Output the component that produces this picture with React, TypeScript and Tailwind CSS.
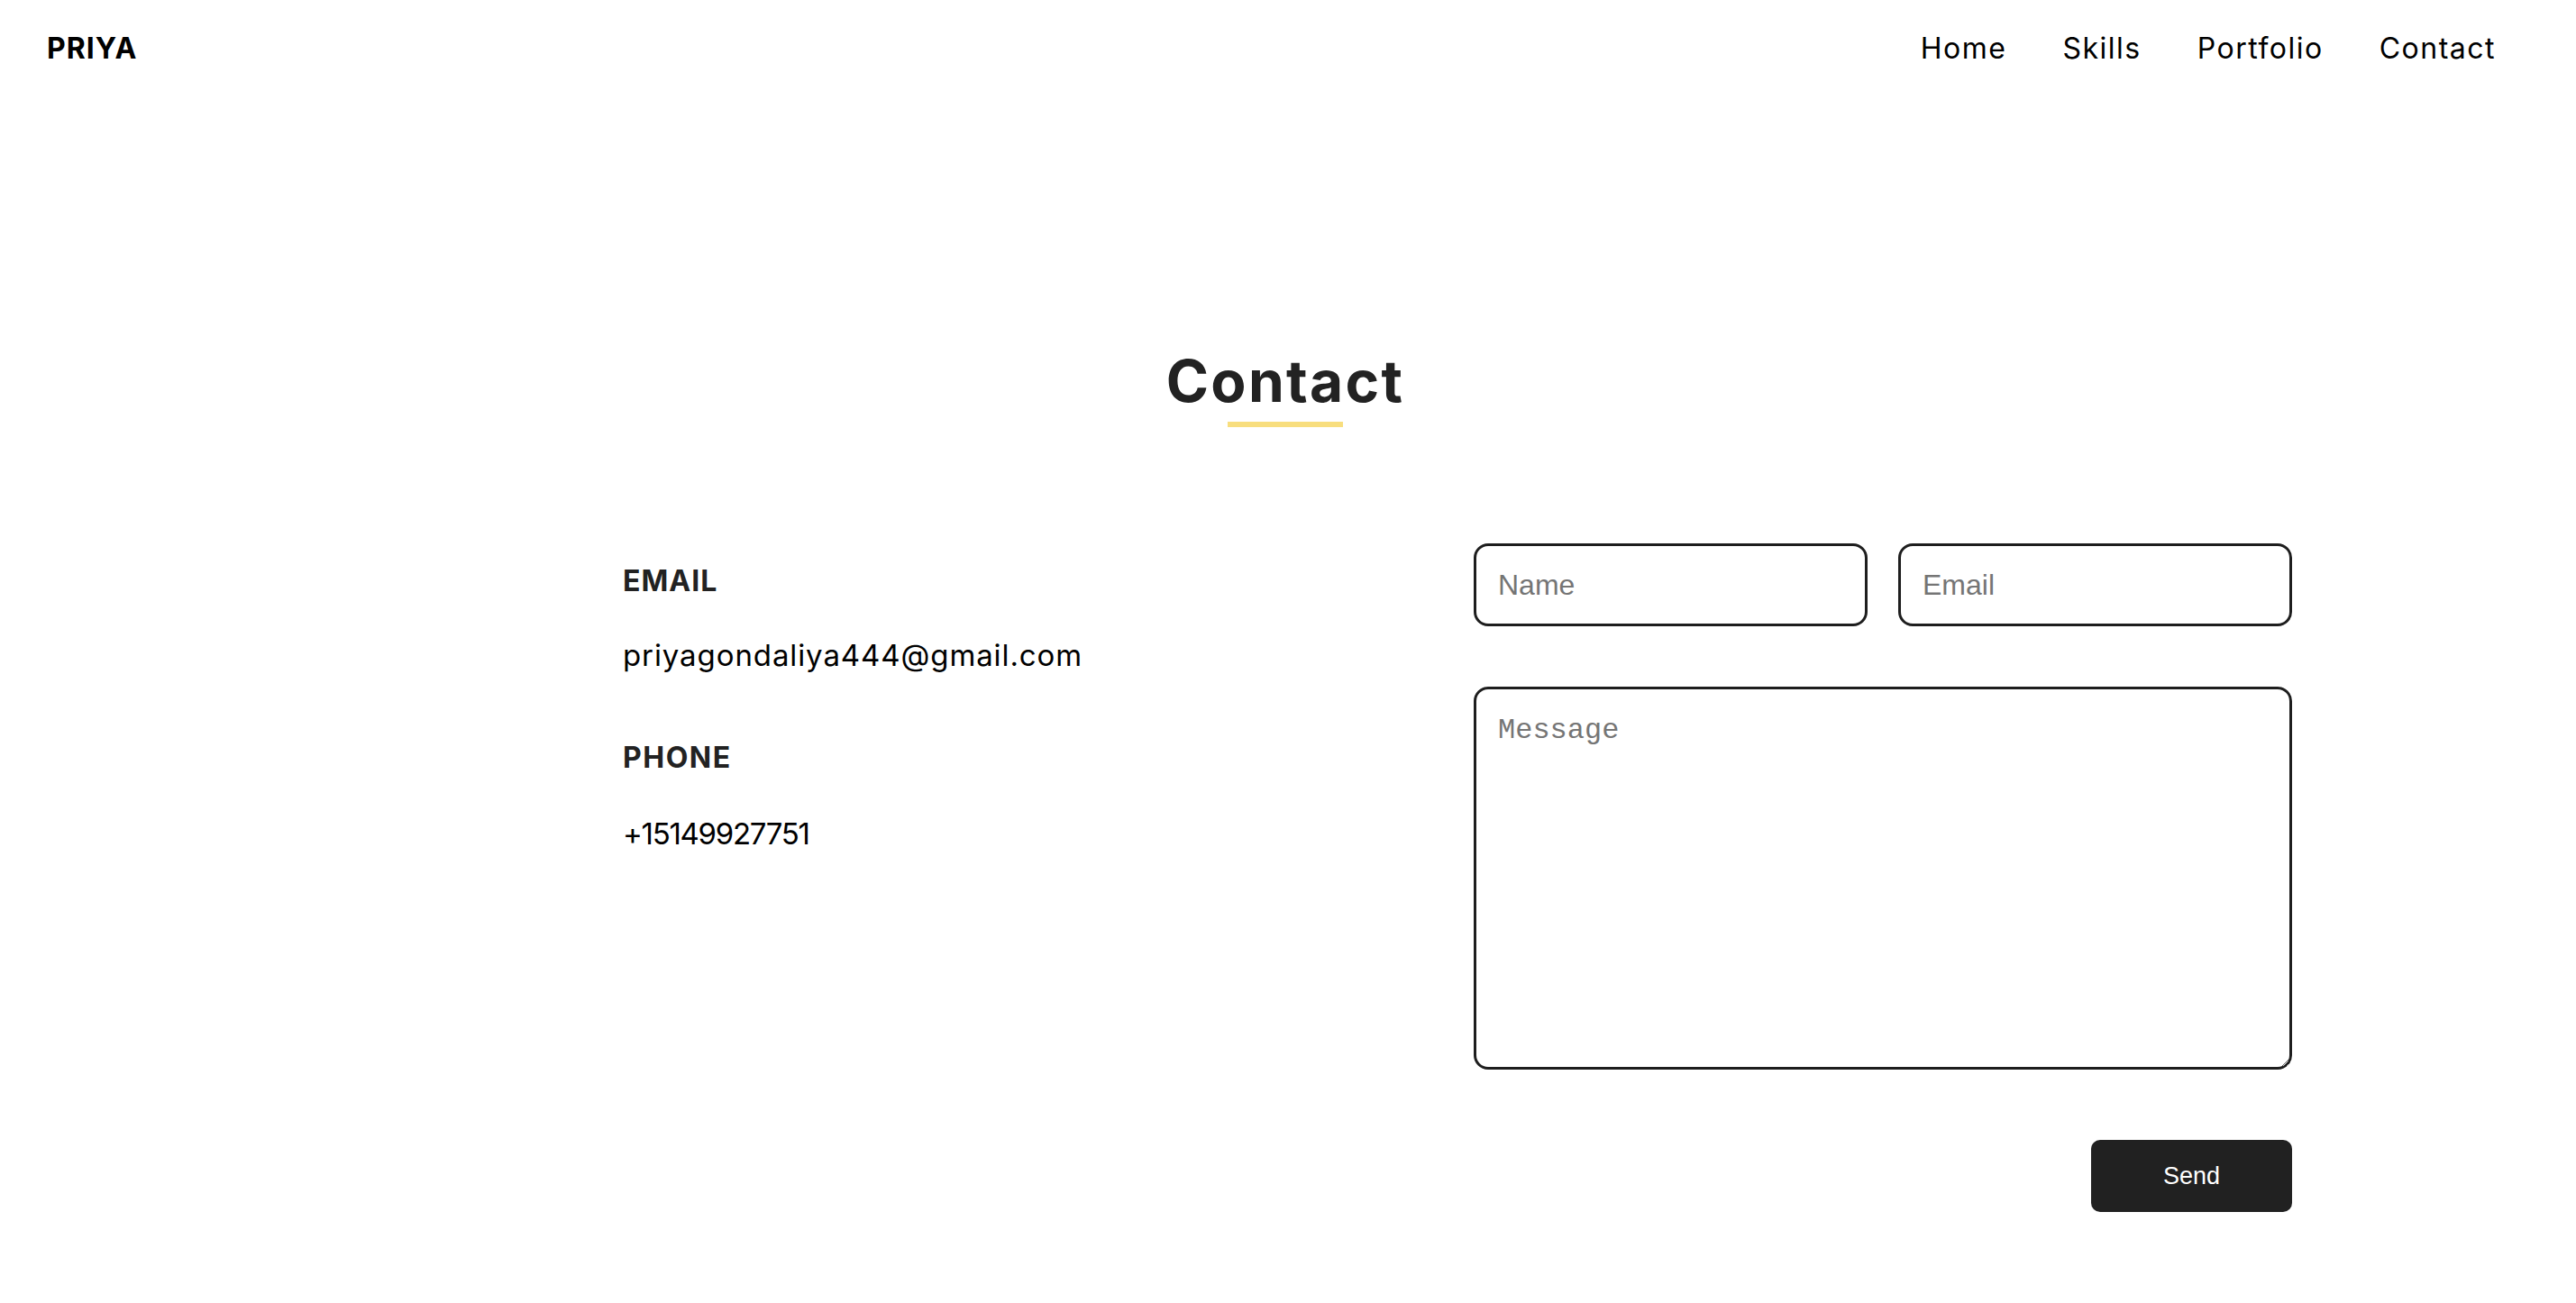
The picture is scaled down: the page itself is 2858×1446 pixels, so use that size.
import React from "react";

export default function App() {
  const sans = { fontFamily: "Inter, 'Open Sans', sans-serif" };
  return (
    <div className="min-h-screen w-full bg-white text-black" style={sans}>
      <header className="flex h-[108px] items-center justify-between pl-[52px] pr-[89px]">
        <div className="text-[32px] font-bold leading-none tracking-[1px] text-black">PRIYA</div>
        <nav className="flex items-center gap-[62px] text-[32px] leading-none tracking-[1.5px] text-black">
          <a>Home</a>
          <a>Skills</a>
          <a>Portfolio</a>
          <a>Contact</a>
        </nav>
      </header>

      <main className="flex flex-col items-center pt-[283px]">
        <div className="flex flex-col items-center pr-[6px]">
          <h1 className="text-[64px] font-bold leading-none tracking-[2.3px] text-[#222222]">Contact</h1>
          <div className="mt-[13px] h-[6px] w-[128px] bg-[#f8de7e]" />
        </div>

        <section className="mt-[129px] flex w-full pl-[691px]">
          <div className="flex w-[944px] flex-col pt-[26px]">
            <div className="text-[32px] font-bold leading-none tracking-[1px] text-[#222222]">EMAIL</div>
            <div className="mt-[50px] text-[33px] leading-none tracking-[0.9px] text-black">priyagondaliya444@gmail.com</div>
            <div className="mt-[81px] text-[32px] font-bold leading-none tracking-[1.5px] text-[#222222]">PHONE</div>
            <div className="mt-[52px] text-[33px] leading-none tracking-[-1.3px] text-black">+15149927751</div>
          </div>

          <form className="flex w-[908px] flex-col" onSubmit={(e) => e.preventDefault()}>
            <div className="grid grid-cols-2 gap-[34px]">
              <input
                type="text"
                placeholder="Name"
                className="h-[92px] rounded-[16px] border-[3px] border-[#1e1e1e] px-[24px] text-[32px] placeholder-[#757575] outline-none"
                style={{ fontFamily: "'Liberation Sans', Arial, sans-serif" }}
              />
              <input
                type="email"
                placeholder="Email"
                className="h-[92px] rounded-[16px] border-[3px] border-[#1e1e1e] px-[24px] text-[32px] placeholder-[#757575] outline-none"
                style={{ fontFamily: "'Liberation Sans', Arial, sans-serif" }}
              />
            </div>
            <textarea
              placeholder="Message"
              className="mt-[67px] h-[425px] rounded-[16px] border-[3px] border-[#1e1e1e] px-[24px] pt-[22px] text-[32px] placeholder-[#757575] outline-none"
              style={{ fontFamily: "'Liberation Mono', 'Courier New', monospace" }}
            />
            <div className="mt-[78px] flex justify-end">
              <button
                type="submit"
                className="h-[80px] w-[223px] rounded-[10px] bg-[#212121] text-[27px] text-white"
                style={{ fontFamily: "'Liberation Sans', Arial, sans-serif" }}
              >
                Send
              </button>
            </div>
          </form>
        </section>
      </main>
    </div>
  );
}
